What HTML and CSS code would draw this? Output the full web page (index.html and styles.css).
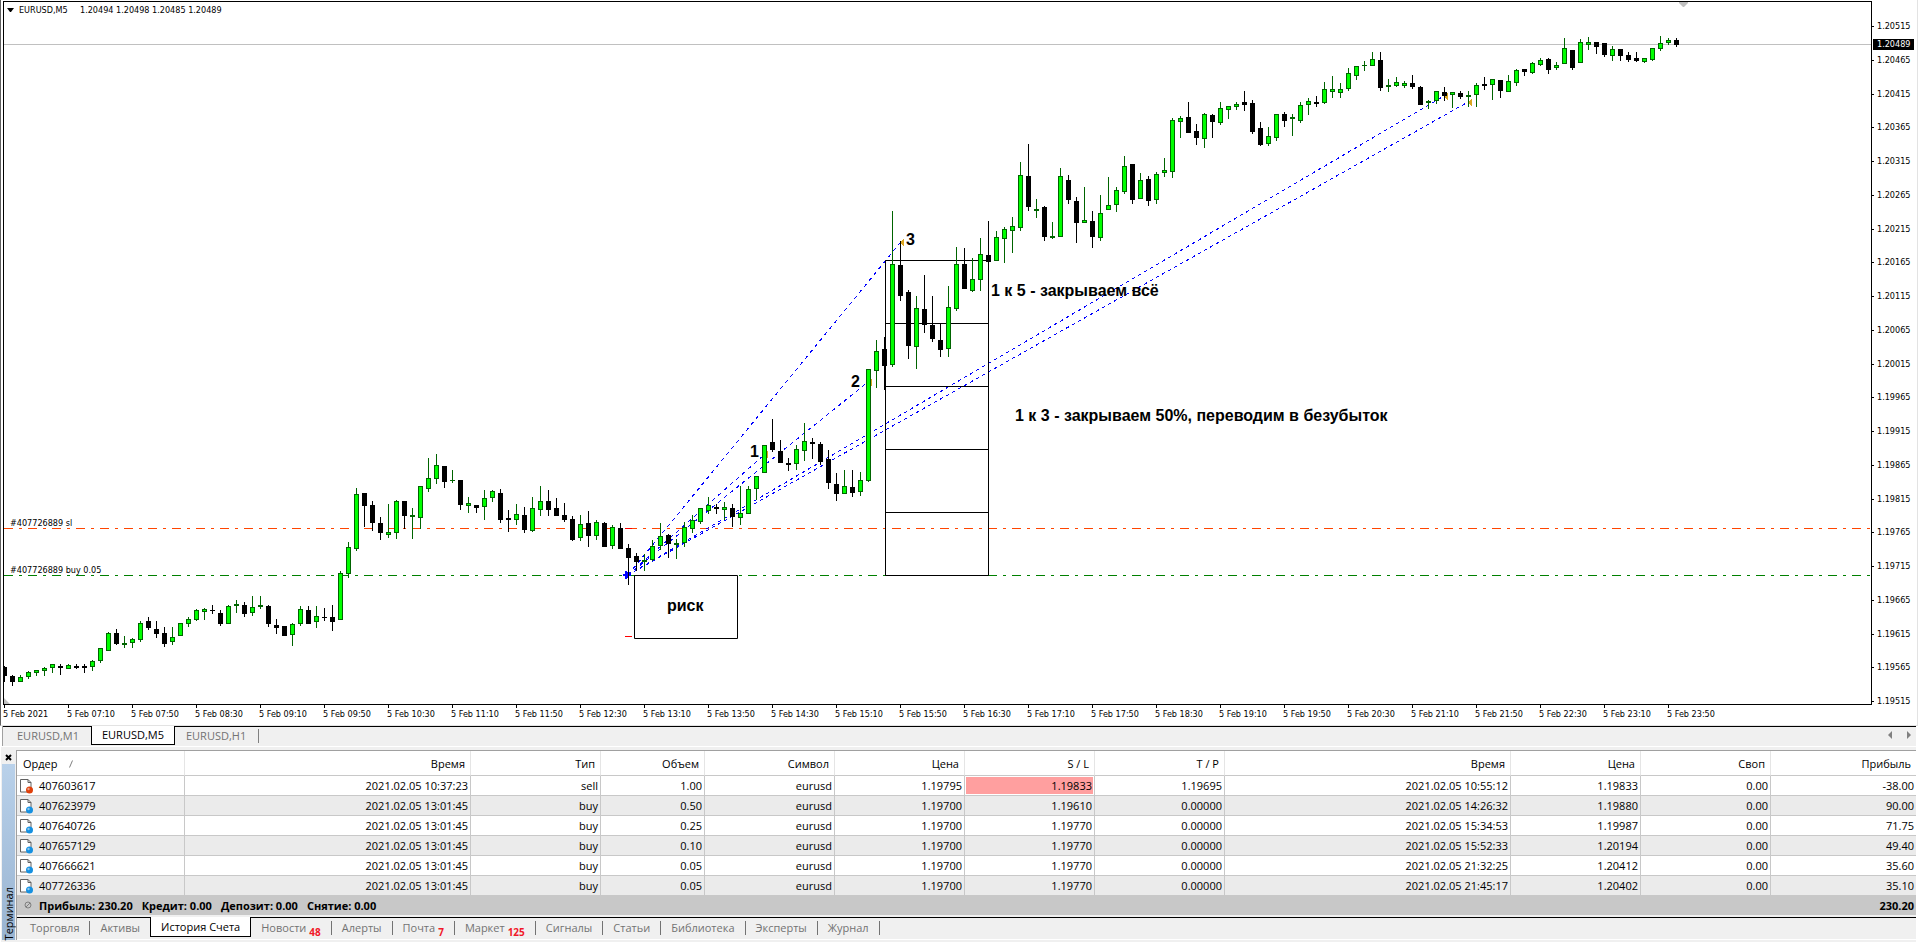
FILE: index.html
```html
<!DOCTYPE html>
<html lang="ru">
<head>
<meta charset="utf-8">
<title>EURUSD,M5</title>
<link rel="stylesheet" href="styles.css">
</head>
<body>
<main class="app">
  <section class="chart" aria-label="EURUSD,M5">
    <div class="plot">
      <svg class="plot-svg" viewBox="4 2 1867 702" role="img" aria-label="График EURUSD M5">
        <path class="marker-gray" d="M1679 2h9v1l-4 4h-1l-4-4zM4 698l6 6h-6z"/>
        <g class="levels">
          <path class="level-price" d="M4 44.5H1871"/>
          <path class="level-sl" d="M4 528.5H1871"/>
          <path class="level-buy" d="M4 575.5H1871"/>
          <path class="stop-mark" d="M625 528.5h7M625 636.5h7"/>
        </g>
        <g class="trades">
          <path pathLength="136" d="M628 575L764 455"/>
          <path pathLength="240" d="M628 575L868 382"/>
          <path pathLength="332" d="M628 575L900 243"/>
          <path pathLength="816" d="M628 575L1444 96"/>
          <path pathLength="840" d="M628 575L1468 102"/>
        </g>
        <path class="exit" d="M768 451v7l-4-3v-1zM872 379v7l-4-3v-1zM904 239v7l-4-3v-1zM1448 93v7l-4-3v-1zM1472 99v7l-4-3v-1z"/>
        <path class="entry" d="M623 574h2v-3h2v1h1v1h1v1h2v2h-2v1h-1v1h-1v1h-2v-3h-2z"/>
        <g class="boxes">
          <path d="M634.5 575.5h103v63h-103z"/>
          <path d="M885.5 260.5h103v315h-103zM885.5 323.5h103M885.5 386.5h103M885.5 449.5h103M885.5 512.5h103"/>
        </g>
        <g id="candles">
          <path class="bull-line" id="bull-line"/>
          <path class="bull-fill" id="bull-fill"/>
          <path class="bear" id="bear"/>
        </g>
        <g class="notes">
          <text x="667" y="611">риск</text>
          <text x="750" y="457">1</text>
          <text x="851" y="387">2</text>
          <text x="906" y="245">3</text>
          <text x="991" y="296">1 к 5 - закрываем всё</text>
          <text x="1015" y="421">1 к 3 - закрываем 50%, переводим в безубыток</text>
        </g>
        <g class="small">
          <path d="M7 8h7l-3 4h-1z"/>
          <text x="19" y="13">EURUSD,M5</text>
          <text x="80" y="13">1.20494 1.20498 1.20485 1.20489</text>
          <text x="10" y="526">#407726889 sl</text>
          <text x="10" y="573">#407726889 buy 0.05</text>
        </g>
      </svg>
    </div>
    <div class="price-axis">
      <ol class="prices" id="prices"></ol>
      <span class="price-now">1.20489</span>
    </div>
    <ol class="time-axis" id="times"></ol>
  </section>

  <nav class="chart-tabs" aria-label="Графики">
    <button class="ctab">EURUSD,M1</button>
    <button class="ctab ctab-on">EURUSD,M5</button>
    <button class="ctab ctab-last">EURUSD,H1</button>
    <span class="scroll">
      <button class="arrow" aria-label="Назад"><svg width="5" height="8"><path d="M4 0v8L0 4z"/></svg></button>
      <button class="arrow" aria-label="Вперёд"><svg width="5" height="8"><path d="M0 0v8l4-4z"/></svg></button>
    </span>
  </nav>

  <section class="terminal" aria-label="Терминал">
    <div class="side">
      <button class="close" aria-label="Закрыть"><svg width="7" height="7" viewBox="0 0 7 7"><path d="M1 1l5 5M6 1L1 6"/></svg></button>
      <div class="side-bar"><span class="side-title">Терминал</span></div>
    </div>
    <div class="pane">
      <table class="orders">
        <colgroup><col class="c168"><col class="c286"><col class="c130"><col class="c104"><col class="c130"><col class="c130"><col class="c130"><col class="c130"><col class="c286"><col class="c130"><col class="c130"><col></colgroup>
        <thead>
          <tr><th class="first">Ордер <svg class="sort" width="5" height="8"><path d="M0.500 7.500L3.500 0.500"/></svg></th><th>Время</th><th>Тип</th><th>Объем</th><th>Символ</th><th>Цена</th><th>S / L</th><th>T / P</th><th>Время</th><th>Цена</th><th>Своп</th><th>Прибыль</th></tr>
        </thead>
        <tbody id="orders"></tbody>
      </table>
      <div class="summary">
        <svg class="dot" width="8" height="8" viewBox="0 0 8 8"><circle cx="4" cy="4" r="3"/><path d="M2 6l4-4"/></svg>
        <span class="totals"><span>Прибыль: 230.20</span><span>Кредит: 0.00</span><span>Депозит: 0.00</span><span>Снятие: 0.00</span></span>
        <span class="sum">230.20</span>
      </div>
      <nav class="tabs" aria-label="Вкладки терминала">
        <button class="tab">Торговля</button>
        <button class="tab tab-pre">Активы</button>
        <button class="tab tab-on">История Счета</button>
        <button class="tab">Новости<span class="count">48</span></button>
        <button class="tab">Алерты</button>
        <button class="tab">Почта<span class="count">7</span></button>
        <button class="tab">Маркет<span class="count">125</span></button>
        <button class="tab">Сигналы</button>
        <button class="tab">Статьи</button>
        <button class="tab">Библиотека</button>
        <button class="tab">Эксперты</button>
        <button class="tab">Журнал</button>
      </nav>
    </div>
  </section>
</main>
<script src="chart.js"></script>
</body>
</html>
```
FILE: styles.css
```css
* { box-sizing: border-box; }

body {
  margin: 0;
  background: #fff;
  color: #000;
  font-family: "Open Sans", "Noto Sans", sans-serif;
  font-size: 11px;
}

ol { list-style: none; margin: 0; padding: 0; }

button {
  font: inherit;
  color: #737373;
  background: none;
  border: 0;
  padding: 0;
  margin: 0;
}

.app { display: flex; flex-direction: column; min-height: 100vh; }

/* Chart window */
.chart {
  display: grid;
  grid-template-columns: 1fr 45px;
  grid-template-rows: auto 20px;
  padding: 1px 0 0 2px;
  margin-right: 6px;
  border-left: 1px solid #606060;
  border-right: 1px solid #e3e3e3;
  border-bottom: 1px solid #e3e3e3;
  font-family: "DejaVu Sans Condensed", "DejaVu Sans", sans-serif;
  font-size: 9px;
}

.plot { border: 1px solid #000; min-width: 0; }
.plot-svg { display: block; width: 100%; height: auto; }

.level-price { stroke: #c0c0c0; }
.level-sl { stroke: #ff4500; stroke-dasharray: 9 6 3 6; }
.level-buy { stroke: #008000; stroke-dasharray: 9 6 3 6; }
.stop-mark { stroke: #f00; }
.marker-gray { fill: #c0c0c0; }
.trades path { stroke: #00f; fill: none; stroke-dasharray: 3 3; shape-rendering: crispEdges; }
.exit { fill: #daa520; shape-rendering: crispEdges; }
.entry { fill: #00f; shape-rendering: crispEdges; }
.boxes path { fill: none; stroke: #000; }
.bull-line { fill: #006400; }
.bull-fill { fill: #0f0; }
.notes text { font: bold 16px "Liberation Sans", Arial, sans-serif; }
.small text { font-size: 9px; }

.price-axis { position: relative; padding-top: 18px; margin-bottom: -3px; }
.prices { display: flex; flex-direction: column; justify-content: space-between; height: 100%; }
.prices li { height: 14px; line-height: 14px; padding-left: 5px; position: relative; }
.prices li::before { content: ""; position: absolute; left: 0; top: 7px; width: 2px; height: 1px; background: #000; }
.price-now {
  position: absolute;
  top: 38px;
  left: 1px;
  width: 41px;
  height: 11px;
  padding-left: 4px;
  line-height: 11px;
  background: #000;
  color: #fff;
}

.time-axis { grid-column: 1 / -1; display: flex; overflow: hidden; }
.time-axis li { flex: 0 0 64px; line-height: 12px; padding-top: 3px; white-space: nowrap; position: relative; }
.time-axis li::before { content: ""; position: absolute; left: 1px; top: 0; width: 1px; height: 3px; background: #000; }

/* Chart tabs */
.chart-tabs {
  display: flex;
  align-items: flex-start;
  height: 21px;
  margin: 0 8px 0 2px;
  background: #f0f0f0;
  border-bottom: 1px solid #fff;
  box-shadow: inset 1px 0 #a0a0a0, inset 0 1px #000;
}
.ctab { height: 19px; line-height: 18px; padding: 0 12px 0 15px; }
.ctab-on { background: #fff; color: #000; border: solid #000; border-width: 0 1px 1px; padding: 0 10px; }
.ctab-last { padding: 0 12px 0 11px; height: 14px; border-right: 1px solid #808080; margin-top: 3px; line-height: 12px; }
.scroll { margin-left: auto; display: flex; gap: 14px; padding: 5px 4px 0 0; }
.arrow { display: block; line-height: 0; }
.arrow svg { fill: #808080; display: block; }

/* Terminal */
.terminal { display: flex; flex: 1; margin-right: 8px; padding: 3px 0 2px 1px; background: #f0f0f0; border-left: 1px solid #fff; }
.side { width: 14px; display: flex; flex-direction: column; }
.close { height: 14px; padding-left: 3px; }
.close svg { display: block; stroke: #000; stroke-width: 2; fill: none; }
.side-bar {
  flex: 1;
  width: 13px;
  display: flex;
  justify-content: center;
  align-items: flex-end;
  background: linear-gradient(#b9d1ea, #99b4d1);
}
.side-title { writing-mode: vertical-rl; transform: rotate(180deg); line-height: 13px; }

.pane { flex: 1; min-width: 0; display: flex; flex-direction: column; border-top: 1px solid #a0a0a0; border-left: 1px solid #a0a0a0; }

.orders { width: 100%; table-layout: fixed; border-collapse: separate; border-spacing: 0; background: #fff; }
.c104 { width: 104px; }
.c130 { width: 130px; }
.c168 { width: 168px; }
.c286 { width: 286px; }
.orders th {
  height: 25px;
  padding: 0 5px 0 6px;
  font-weight: normal;
  text-align: right;
  border-right: 1px solid #e5e5e5;
  border-bottom: 1px solid #c8c8c8;
}
.orders .first { text-align: left; }
.sort { margin-left: 9px; fill: none; stroke: #808080; }
.orders td {
  height: 20px;
  padding: 0 2px;
  line-height: 19px;
  text-align: right;
  border-right: 1px solid #c8c8c8;
  border-bottom: 1px solid #c8c8c8;
}
.orders th:last-child, .orders td:last-child { border-right: 0; }
.orders td.order { text-align: left; }
.orders tr:nth-child(even) td { background: #ebebeb; }
.orders tbody tr:last-child td { height: 19px; border-bottom: 0; }
.orders td.hit { background: #ff9f9f; box-shadow: inset 0 0 0 1px #fff; }
.order-cell { display: flex; align-items: center; gap: 5px; }
.doc { display: block; }

.summary { display: flex; align-items: center; height: 20px; padding: 0 2px 0 7px; background: #c8c8c8; font-weight: bold; }
.dot { fill: none; stroke: #808080; }
.totals { display: flex; gap: 9px; margin-left: 7px; }
.sum { margin-left: auto; }

.tabs { display: flex; align-items: flex-start; margin-top: 2px; height: 23px; border-bottom: 1px solid #fff; box-shadow: inset 0 1px #000; }
.tab { height: 14px; line-height: 12px; margin-top: 4px; padding: 0 10px; border-right: 1px solid #737373; white-space: nowrap; }
.tab:first-child { padding-left: 13px; }
.tab-pre { border-right: 0; }
.tab-on { margin-top: 0; height: 20px; line-height: 19px; color: #000; background: #fff; border: solid #000; border-width: 0 1px 1px; }
.count { display: inline-block; margin-left: 3px; line-height: 9px; font-size: 10px; font-weight: bold; color: #f01828; position: relative; top: 4px; }
```
FILE: chart.js
```js
// Candles, oldest first: kind (u = up, d = down), high, body top, body bottom, low.
const candles = `d666 667 676 682|d675 676 682 686|u675 677 682 682|u671 672 677 679|u670 670 673 676|u667 668 671 676|u664 664 668 673|d664 666 668 675|u664 665 669 669|d664 666 668 669
d664 666 668 673|u660 661 667 671|u648 648 661 663|u632 633 651 651|d629 633 644 645|u636 643 645 648|u638 639 643 648|u621 623 640 642|d617 621 628 630|d621 629 634 638
d627 633 644 647|u627 637 642 645|u623 623 636 636|u617 619 624 627|u609 610 620 621|u608 609 612 620|d605 610 611 614|d610 613 624 626|u605 606 624 624|u600 604 606 613
d602 605 614 617|u596 607 613 616|u596 605 607 609|d605 606 624 627|d619 625 628 634|d626 626 636 636|u623 624 635 646|u606 609 624 626|d606 610 624 624|u606 616 622 628
d608 617 618 621|d605 617 622 631|u571 573 620 620|u542 547 574 578|u488 494 549 551|d493 493 506 527|d501 505 523 531|d517 523 533 540|u504 532 535 538|u500 501 533 539
d501 501 516 529|u508 515 517 539|u486 486 518 529|u458 478 489 492|u454 465 479 484|d466 466 482 488|u470 480 481 483|d480 480 505 510|u497 503 506 513|d505 505 508 513
u490 498 507 520|u490 491 498 502|d489 493 520 523|d510 518 520 532|u504 514 520 525|d507 515 530 533|u497 508 531 532|u486 501 510 516|d490 501 510 516|d498 508 516 516
d503 515 520 522|d516 519 540 541|u515 524 538 541|d511 523 536 547|u520 522 536 540|d522 523 547 547|u525 527 546 549|d523 528 549 549|d544 548 558 585|d553 556 562 571
u554 560 562 571|u540 546 560 561|u523 536 546 550|d534 535 544 558|u539 543 545 559|u522 527 543 547|u515 520 529 533|u508 508 522 524|u497 505 511 514|d504 507 509 514
u502 507 510 520|d504 508 517 527|u486 513 518 525|u486 489 514 514|u476 476 489 500|u445 445 473 473|d419 442 450 452|d440 451 463 463|d458 463 465 471|u445 449 464 470
u423 441 451 461|d438 442 444 459|d442 444 462 465|d450 459 483 489|d473 484 494 501|u470 486 494 494|d470 487 493 497|u472 480 492 496|u369 369 481 482|u340 351 371 388
d337 349 366 390|u211 264 365 367|d241 265 296 301|d290 292 346 359|u296 308 347 369|d275 309 325 333|d296 325 339 342|d324 340 350 357|u286 307 349 357|u247 264 309 311
d248 264 289 289|u258 279 291 292|u238 254 280 291|d221 255 262 262|u231 237 261 261|u227 229 239 263|u217 226 231 253|u162 175 228 231|d144 176 207 211|u199 209 211 218
d206 207 237 241|u222 236 238 239|u168 176 237 237|d175 180 200 204|d197 201 223 243|u187 220 223 223|d211 221 237 248|u195 213 238 241|u177 205 210 210|u187 190 205 212
u156 166 192 194|d164 164 200 204|u173 180 199 199|d176 179 201 206|u172 174 200 204|u158 170 173 177|u118 120 172 178|u116 118 122 138|d102 117 133 133|d124 131 138 145
u113 114 139 148|d114 115 122 138|u102 108 123 125|u106 106 110 119|u102 104 107 110|d91 102 105 111|d100 103 132 134|d122 128 145 146|u127 136 144 146|u114 114 138 141
d112 114 121 127|u114 117 119 136|u102 105 121 123|u98 101 105 115|d96 102 104 107|u82 89 103 104|u76 89 92 98|u83 89 93 98|u68 73 89 91|u66 66 76 80
u61 65 66 71|u52 59 66 66|d52 60 88 91|u79 85 87 92|u77 82 86 87|u81 83 86 88|d75 83 87 89|d86 87 105 105|u100 101 103 109|u91 91 101 104
d87 92 96 101|u92 92 95 108|d91 93 97 99|u91 95 97 107|u83 85 95 107|d77 84 86 90|u79 79 85 100|d80 80 91 98|u75 81 92 92|u69 70 83 86
d69 69 72 76|u62 63 73 74|u58 60 65 66|d58 59 70 74|u62 65 68 70|u38 48 64 64|d50 50 68 70|u39 42 63 63|u37 42 45 50|d42 42 47 54
d43 43 55 57|u46 49 56 61|d49 49 56 61|d52 55 60 62|d52 58 61 62|u58 58 62 63|u48 48 60 61|u36 43 49 51|u38 40 43 45|d38 40 45 47`.split(/[|\n]/);

const START = 4, STEP = 8;
const rect = (x, y, w, h) => `M${x} ${y}h${w}v${h}h${-w}z`;
let line = "", fill = "", bear = "";
candles.forEach((c, i) => {
  const [high, top, bottom, low] = c.slice(1).split(" ").map(Number);
  const x = START + i * STEP;
  const shape = rect(x, high, 1, low - high) + rect(x - 2, top, 5, bottom - top);
  if (c[0] === "u") {
    line += shape;
    if (bottom - top > 2) fill += rect(x - 1, top + 1, 3, bottom - top - 2);
  } else {
    bear += shape;
  }
});
document.getElementById("bull-line").setAttribute("d", line);
document.getElementById("bull-fill").setAttribute("d", fill);
document.getElementById("bear").setAttribute("d", bear);

document.getElementById("prices").innerHTML = Array.from({ length: 21 }, (_, i) =>
  `<li>${((120515 - i * 50) / 100000).toFixed(5)}</li>`).join("");

document.getElementById("times").innerHTML = Array.from({ length: 27 }, (_, i) => {
  const m = 390 + i * 40;
  const t = `${String(Math.floor(m / 60)).padStart(2, "0")}:${String(m % 60).padStart(2, "0")}`;
  return `<li>5 Feb ${i ? t : "2021"}</li>`;
}).join("");

const orders = [
  ["407603617", "2021.02.05 10:37:23", "sell", "1.00", "eurusd", "1.19795", "1.19833", "1.19695", "2021.02.05 10:55:12", "1.19833", "0.00", "-38.00"],
  ["407623979", "2021.02.05 13:01:45", "buy", "0.50", "eurusd", "1.19700", "1.19610", "0.00000", "2021.02.05 14:26:32", "1.19880", "0.00", "90.00"],
  ["407640726", "2021.02.05 13:01:45", "buy", "0.25", "eurusd", "1.19700", "1.19770", "0.00000", "2021.02.05 15:34:53", "1.19987", "0.00", "71.75"],
  ["407657129", "2021.02.05 13:01:45", "buy", "0.10", "eurusd", "1.19700", "1.19770", "0.00000", "2021.02.05 15:52:33", "1.20194", "0.00", "49.40"],
  ["407666621", "2021.02.05 13:01:45", "buy", "0.05", "eurusd", "1.19700", "1.19770", "0.00000", "2021.02.05 21:32:25", "1.20412", "0.00", "35.60"],
  ["407726336", "2021.02.05 13:01:45", "buy", "0.05", "eurusd", "1.19700", "1.19770", "0.00000", "2021.02.05 21:45:17", "1.20402", "0.00", "35.10"]
];
const icon = color => `<svg class="doc" width="15" height="16" viewBox="0 0 15 16"><path d="M1.500 1.500H9l3 3v9.500H1.500z" fill="#fff" stroke="#606060"/><path d="M9 1.500v3h3" fill="none" stroke="#606060"/><circle cx="10.500" cy="12" r="3.500" fill="${color}"/><circle cx="9.500" cy="11" r="1.200" fill="#fff" opacity=".5"/></svg>`;
document.getElementById("orders").innerHTML = orders.map((row, r) => "<tr>" + row.map((v, c) => {
  if (c === 0) return `<td class="order"><span class="order-cell">${icon(r ? "#1590e0" : "#e0400a")}${v}</span></td>`;
  return `<td${r === 0 && c === 6 ? ' class="hit"' : ""}>${v}</td>`;
}).join("") + "</tr>").join("");
```
